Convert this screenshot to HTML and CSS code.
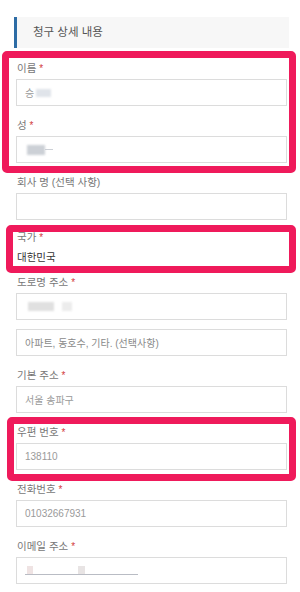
FILE: index.html
```html
<!DOCTYPE html>
<html lang="ko">
<head>
<meta charset="UTF-8">
<meta name="viewport" content="width=device-width, initial-scale=1.0">
<title>청구 상세 내용</title>
<link rel="stylesheet" href="styles.css">
</head>
<body>
<h2 class="section-title">청구 상세 내용</h2>

<div class="form">
  <!-- name block (highlighted) -->
  <div class="mark mark-name">
    <div class="field">
      <label class="label">이름 <b>*</b></label>
      <div class="input"><span>승</span><span class="smudge smudge-name"></span></div>
    </div>
    <div class="field">
      <label class="label">성 <b>*</b></label>
      <div class="input"><span class="smudge smudge-last"></span><span class="smudge-line"></span></div>
    </div>
    <span class="frame"></span>
  </div>

  <div class="field">
    <label class="label">회사 명 (선택 사항)</label>
    <div class="input"></div>
  </div>

  <!-- country (highlighted) -->
  <div class="mark mark-country">
    <div class="field field-static">
      <label class="label">국가 <b>*</b></label>
      <div class="value">대한민국</div>
    </div>
    <span class="frame"></span>
  </div>

  <div class="field field-address">
    <label class="label">도로명 주소 <b>*</b></label>
    <div class="input"><span class="smudge smudge-road"></span><span class="smudge smudge-road2"></span></div>
    <div class="input placeholder">아파트, 동호수, 기타. (선택사항)</div>
  </div>

  <div class="field">
    <label class="label">기본 주소 <b>*</b></label>
    <div class="input">서울 송파구</div>
  </div>

  <!-- zip (highlighted) -->
  <div class="mark mark-zip">
    <div class="field">
      <label class="label">우편 번호 <b>*</b></label>
      <div class="input">138110</div>
    </div>
    <span class="frame"></span>
  </div>

  <div class="field">
    <label class="label">전화번호 <b>*</b></label>
    <div class="input">01032667931</div>
  </div>

  <div class="field">
    <label class="label">이메일 주소 <b>*</b></label>
    <div class="input"><span class="email-blur"><span class="dot dot-a"></span><span class="dot dot-b"></span></span></div>
  </div>
</div>
</body>
</html>
```

FILE: styles.css
```css
body {
    margin: 0;
    background: #fff;
    font-family: "Liberation Sans", "Noto Sans CJK KR", sans-serif;
}

.section-title {
    margin: 17px 11px 0 14px;
    height: 31px;
    line-height: 31px;
    padding-left: 16px;
    background-color: #f7f7f7;
    border-left: 3px solid #2d6ca5;
    font-size: 11.5px;
    font-weight: normal;
    color: #555;
}

.form {
    display: flex;
    flex-direction: column;
    gap: 11px;
    padding: 12px 13px 20px 16px;
}

.field {
    display: flex;
    flex-direction: column;
    gap: 3px;
}

.label {
    display: block;
    height: 16px;
    overflow: hidden;
    padding-left: 1px;
    font-size: 10.5px;
    line-height: 16px;
    color: #777;
}

.label b {
    color: #d23b3b;
    font-weight: normal;
    font-size: 10px;
    line-height: 1;
}

.value {
    margin-top: 1px;
    padding-left: 1px;
    font-size: 10.5px;
    line-height: 16px;
    color: #333;
}

.input {
    height: 27px;
    box-sizing: border-box;
    border: 1px solid #dcdcdc;
    padding: 0 8px;
    display: flex;
    align-items: center;
    font-size: 10px;
    color: #9a9a9a;
}

.placeholder {
    color: #8a8a8a;
}

.field-address .input + .input {
    margin-top: 6px;
}

/* red highlight boxes drawn over the form */
.mark {
    position: relative;
    display: flex;
    flex-direction: column;
    gap: 11px;
}

.frame {
    position: absolute;
    border: 7px solid #ef1a5b;
    border-radius: 5px;
    pointer-events: none;
}

.mark-name .frame {
    top: -9px;
    bottom: -10px;
    left: -14px;
    right: -9px;
}

.mark-country {
    margin: -2px 0;
}

.mark-country .frame {
    top: -4px;
    bottom: -8px;
    left: -10px;
    right: -9px;
}

.mark-zip .frame {
    top: -7px;
    bottom: -11px;
    left: -9px;
    right: -9px;
}

/* blurred personal data */
.smudge {
    display: inline-block;
    filter: blur(1.2px);
}

.smudge-name {
    width: 15px;
    height: 8px;
    margin-left: 2px;
    background: #e0e4ea;
}

.smudge-last {
    width: 18px;
    height: 10px;
    margin-left: 2px;
    background: #ccd0d6;
}

.smudge-line {
    width: 8px;
    height: 1px;
    background: #ccd0d6;
}

.smudge-road {
    width: 26px;
    height: 9px;
    margin-left: 3px;
    background: #e0e0e0;
}

.smudge-road2 {
    width: 10px;
    height: 9px;
    margin-left: 8px;
    background: #ececec;
}

.email-blur {
    position: relative;
    display: inline-block;
    width: 113px;
    height: 1px;
    margin-top: 8px;
    background: #b9bcc4;
    filter: blur(0.4px);
}

.dot {
    position: absolute;
    top: -8px;
    width: 6px;
    height: 8px;
    background: #efe3e3;
}

.dot-a {
    left: 2px;
}

.dot-b {
    left: 53px;
    width: 7px;
    background: #e8e4e4;
}
```
